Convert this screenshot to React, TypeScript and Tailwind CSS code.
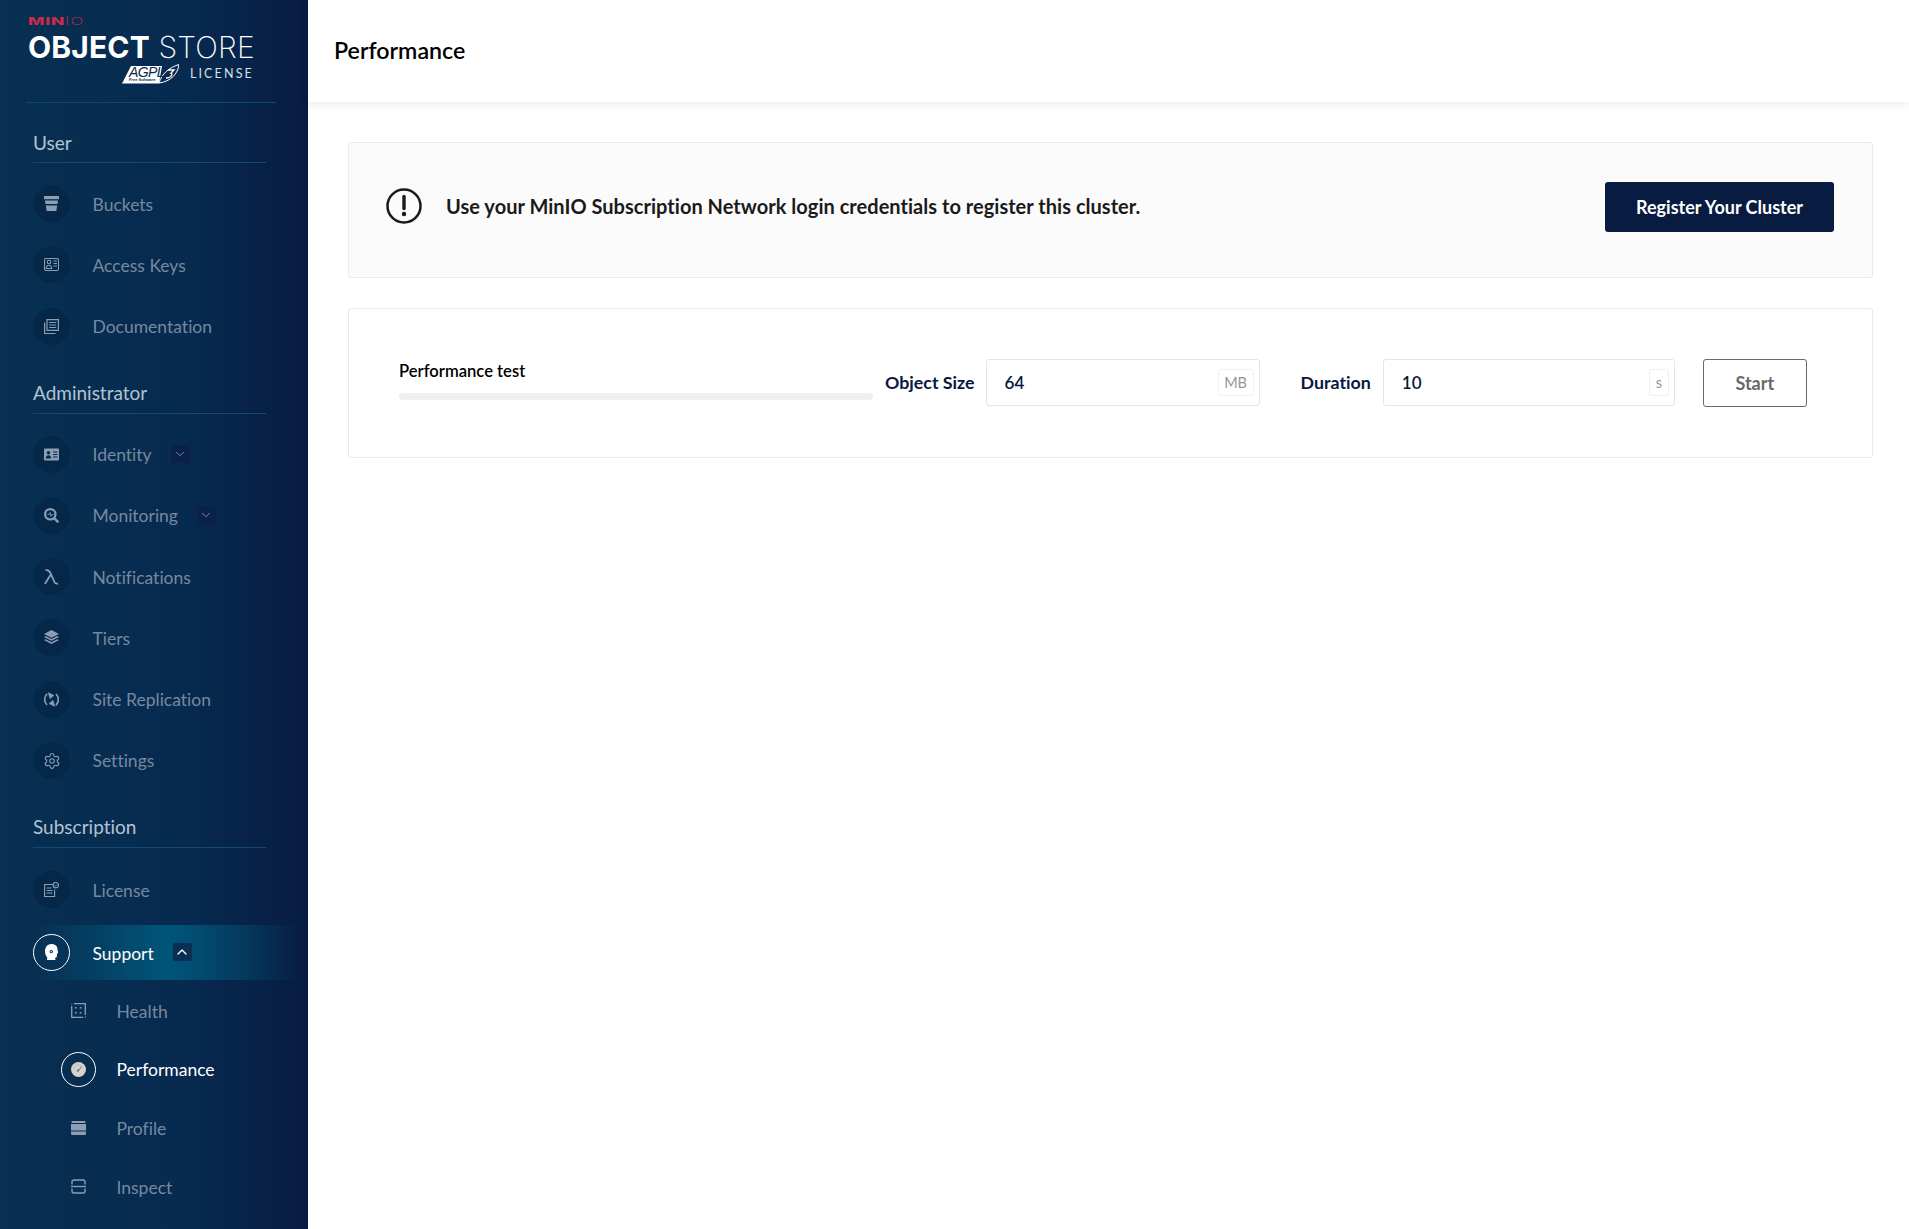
import React from "react";
import { ChevronDown, ChevronUp, Settings } from "lucide-react";

const IconBucket = () => (
  <svg width="15" height="15" viewBox="0 0 15 15" fill="currentColor">
    <path d="M0 0h15v3.200H0z" />
    <path d="M1 4.600h13l-.5 3.400H1.500z" />
    <path d="M1.800 9.400h11.400l-.9 5.600H2.700z" />
  </svg>
);

const IconAccess = () => (
  <svg width="15" height="15" viewBox="0 0 15 15" fill="none" stroke="currentColor" strokeWidth="1.100">
    <rect x="0.500" y="1.500" width="14" height="12" rx="1.500" />
    <circle cx="5" cy="5" r="1.800" />
    <path d="M2.200 11.500c0-2.200 1.200-3.300 2.800-3.300s2.800 1.100 2.800 3.300z" />
    <path d="M9.500 4h3.500M9.500 6.500h3.500M9.500 9h3.500" />
  </svg>
);

const IconDocs = () => (
  <svg width="15" height="15" viewBox="0 0 15 15" fill="none" stroke="currentColor" strokeWidth="1.200">
    <path d="M3 .6h11.400v10.800H3z" />
    <path d="M.6 3.500v11h11" />
    <path d="M5.200 3.500h7M5.200 6h7M5.200 8.500h7" />
  </svg>
);

const IconIdentity = () => (
  <svg width="15" height="15" viewBox="0 0 15 15" fill="currentColor">
    <path fillRule="evenodd" d="M1 1.500h13a1 1 0 0 1 1 1v10a1 1 0 0 1-1 1H1a1 1 0 0 1-1-1v-10a1 1 0 0 1 1-1zM4.500 4a1.700 1.700 0 1 0 0 3.400 1.700 1.700 0 0 0 0-3.400zM1.800 11.500h5.400c0-2-1.200-3.200-2.700-3.200s-2.700 1.200-2.700 3.200zM9 4.500v1h4.500v-1zM9 7v1h4.500V7zM9 9.500v1h4.500v-1z" />
  </svg>
);

const IconMonitoring = () => (
  <svg width="15" height="15" viewBox="0 0 15 15" fill="none" stroke="currentColor">
    <circle cx="6.300" cy="6.300" r="5.200" strokeWidth="2.200" />
    <path d="M10 10l4.300 4.300" strokeWidth="2.400" />
    <path d="M3.500 6.500h1.500l1-2 1 4 .8-2H9.500" strokeWidth="0.900" />
  </svg>
);

const IconLambda = () => (
  <svg width="15" height="16" viewBox="0 0 15 16" fill="none" stroke="currentColor" strokeWidth="1.800">
    <path d="M1.500 1.200c3-.6 4 .4 5 3l4 9c.6 1.400 1.800 1.700 3.500 1.400" />
    <path d="M6.800 5.500L.9 15" />
  </svg>
);

const IconTiers = () => (
  <svg width="15" height="15" viewBox="0 0 15 15" fill="currentColor">
    <path d="M7.500 0L15 3.900 7.500 7.800 0 3.900z" />
    <path d="M1.700 6l5.800 3 5.800-3 1.700.9-7.500 3.900L0 6.900z" />
    <path d="M1.700 9.200l5.800 3 5.800-3 1.700.9L7.500 14 0 10.100z" />
  </svg>
);

const IconReplication = () => (
  <svg width="15" height="15" viewBox="0 0 15 15" fill="none" stroke="currentColor" strokeWidth="1.600">
    <path d="M3 13C-.2 9.800 0 4.500 3.200 1.800" />
    <path d="M12 2c3.200 3.200 3 8.500-.2 11.200" />
    <path d="M4.200.6L10 3.400 6 6.800z" fill="currentColor" strokeWidth="0.500" />
    <path d="M10.800 14.400L5 11.600l4-3.400z" fill="currentColor" strokeWidth="0.500" />
  </svg>
);

const IconLicense = () => (
  <svg width="15" height="15" viewBox="0 0 15 15" fill="none" stroke="currentColor" strokeWidth="1.100">
    <path d="M9 2.500H.6v12h10V7.500" />
    <path d="M2.600 6h5M2.600 8.500h6M2.600 11h6" />
    <circle cx="11.800" cy="3.200" r="2.700" />
    <path d="M10.500 3.200l1 1 1.600-1.800" strokeWidth="0.800" />
  </svg>
);

const IconSupport = () => (
  <svg width="13" height="16" viewBox="0 0 13 16" fill="currentColor">
    <path fillRule="evenodd" d="M6.500 0C10 0 12.500 2.200 12.500 5.200c0 1.300.5 2.300.5 3.300 0 .8-.7 1.200-1 1.500l-.2 2.500c-.1.800-.8 1.300-1.600 1.300H10L10.500 16H2l.3-2.600C.9 12 0 9.800 0 7.200 0 2.800 2.800 0 6.500 0zM6.300 5.900a1.700 1.700 0 1 0 0 3.400 1.700 1.700 0 0 0 0-3.400z" />
    <circle cx="6.300" cy="7.600" r="0.700" />
    <path d="M7.300 8.800l1.700 2.200-.7.500-1.600-2.100z" />
  </svg>
);

const IconHealth = () => (
  <svg width="15" height="15" viewBox="0 0 15 15" fill="none" stroke="currentColor" strokeWidth="1.300">
    <path d="M.7 3v11.300h11.300" />
    <path d="M3 .7h11.300V12" />
    <path d="M14.300 13.500v1" />
    <path d="M.7.700v.8" />
    <g fill="currentColor" stroke="none">
      <rect x="4" y="4" width="1.600" height="1.600" />
      <rect x="8.700" y="4" width="1.600" height="1.600" />
      <rect x="4" y="9" width="1.600" height="1.600" />
      <rect x="8.700" y="9" width="1.600" height="1.600" />
    </g>
  </svg>
);

const IconGauge = () => (
  <svg width="15" height="15" viewBox="0 0 15 15">
    <circle cx="7.500" cy="7.500" r="7.500" fill="#d8d2cc" />
    <path d="M7.500 8.500L10.500 4.500" stroke="#6b7b8c" strokeWidth="1" />
    <circle cx="7" cy="8.500" r="1.300" fill="#6b7b8c" />
    <path d="M3 7a4.500 4.500 0 0 1 8-2.500" fill="none" stroke="#8e9aa6" strokeWidth="0.800" strokeDasharray="1 1" />
  </svg>
);

const IconProfile = () => (
  <svg width="15" height="14" viewBox="0 0 15 14" fill="currentColor">
    <path d="M1.500 0h12a1 1 0 0 1 1 1v1H.5V1a1 1 0 0 1 1-1z" />
    <rect x="0" y="3" width="15" height="6.500" />
    <path d="M0 10.500h15V12.500a1.500 1.500 0 0 1-1.500 1.500h-12A1.500 1.500 0 0 1 0 12.500z" />
  </svg>
);

const IconInspect = () => (
  <svg width="15" height="15" viewBox="0 0 15 15" fill="none" stroke="currentColor" strokeWidth="1.400">
    <path d="M1 5.500V3a2 2 0 0 1 2-2h9a2 2 0 0 1 2 2v2.500" />
    <path d="M1 9.500V12a2 2 0 0 0 2 2h9a2 2 0 0 0 2-2V9.500" />
    <path d="M0 7.500h15" />
  </svg>
);

const Logo = () => (
  <div className="h-[103px] mx-[26px] w-[250px] border-b border-[#0e4a6a] pt-[16px] pl-[2px] shrink-0 font-['Inter',sans-serif]">
    <div className="text-[#c72c48] text-[11px] leading-[11px] font-extrabold tracking-[0.5px] scale-x-[1.58] origin-left">
      MIN<span className="font-extralight">IO</span>
    </div>
    <div className="text-white text-[30px] leading-[28px] mt-[6px] whitespace-nowrap tracking-[0.15px]">
      <span className="font-bold">OBJECT</span> <span className="font-extralight">STORE</span>
    </div>
    <div className="flex items-center justify-end mt-[3px] pr-[22px]">
      <div className="relative w-[57px] h-[20px] mr-[11px]">
        <svg width="57" height="20" viewBox="0 0 57 20" className="absolute inset-0">
          <path d="M9 2h31l-3 17.500H0z" fill="#fff" />
          <path d="M37 19c3-9 9-15 20-18.500-1 9-8 17-20 18.500z" fill="#0b2a4d" stroke="#fff" strokeWidth="1" />
          <path d="M46 6h6l-3 3c2 0 1 5-5 5" fill="none" stroke="#fff" strokeWidth="1.300" />
        </svg>
        <span className="absolute left-[7px] top-[1px] text-[#0b2a4d] text-[14px] leading-[14px] italic font-['Liberation_Sans',sans-serif] tracking-[-0.6px]">
          AGPL
        </span>
        <span className="absolute left-[7px] top-[14px] text-[#0b2a4d] text-[4px] leading-[4px] font-bold font-['Liberation_Sans',sans-serif] whitespace-nowrap">
          Free Software
        </span>
      </div>
      <span className="text-[#d9e0e8] text-[12.500px] leading-[16px] tracking-[2.150px] font-['Lato',sans-serif]">LICENSE</span>
    </div>
  </div>
);

const SectionHeader = ({ title, className }: { title: string; className: string }) => (
  <div className={`mx-[33px] w-[233px] border-b border-[#124a70] flex items-end text-[#b4c3d2] text-[19px] leading-[24px] ${className}`}>
    {title}
  </div>
);

type NavItemProps = {
  icon: React.ReactNode;
  label: string;
  chevron?: boolean;
};

const NavItem = ({ icon, label, chevron }: NavItemProps) => (
  <div className="h-[61.300px] pl-[33px] flex items-center">
    <div className="w-[37px] h-[37px] rounded-full bg-[#052849] flex items-center justify-center text-[#8b9eb3]">
      {icon}
    </div>
    <span className="ml-[22.500px] mt-[2px] text-[#76899f] text-[17.500px]">{label}</span>
    {chevron && (
      <span className="ml-[19px] w-[19px] h-[18px] rounded-[2px] bg-[#0a224a] flex items-center justify-center text-[#8499b0]">
        <ChevronDown size={14} strokeWidth={1.500} />
      </span>
    )}
  </div>
);

const SubItem = ({ icon, label, active }: { icon: React.ReactNode; label: string; active?: boolean }) => (
  <div className="h-[58.700px] pl-[61px] flex items-center">
    <div className={`w-[35px] h-[35px] rounded-full flex items-center justify-center text-[#8b9eb3] ${active ? "border border-white" : ""}`}>
      {icon}
    </div>
    <span className={`ml-[20.500px] mt-[2px] text-[17.500px] ${active ? "text-white" : "text-[#76899f]"}`}>{label}</span>
  </div>
);

const Sidebar = () => (
  <aside className="w-[308px] h-[1229px] shrink-0 overflow-hidden text-[#76899f] bg-[linear-gradient(90deg,#073052_0%,#072a50_60%,#081c42_100%)]">
    <Logo />
    <SectionHeader title="User" className="h-[60px] pb-[7px]" />
    <div className="mt-[10px]">
      <NavItem icon={<IconBucket />} label="Buckets" />
      <NavItem icon={<IconAccess />} label="Access Keys" />
      <NavItem icon={<IconDocs />} label="Documentation" />
    </div>
    <SectionHeader title="Administrator" className="h-[57px] pb-[8px]" />
    <div className="mt-[9.500px]">
      <NavItem icon={<IconIdentity />} label="Identity" chevron />
      <NavItem icon={<IconMonitoring />} label="Monitoring" chevron />
      <NavItem icon={<IconLambda />} label="Notifications" />
      <NavItem icon={<IconTiers />} label="Tiers" />
      <NavItem icon={<IconReplication />} label="Site Replication" />
      <NavItem icon={<Settings size={18} strokeWidth={1.500} />} label="Settings" />
    </div>
    <SectionHeader title="Subscription" className="h-[57px] pb-[8px]" />
    <div className="mt-[11px]">
      <NavItem icon={<IconLicense />} label="License" />
      <div className="h-[55px] mt-[4.400px] ml-[33px] mr-[8px] flex items-center bg-[linear-gradient(90deg,transparent_0%,#00567a_50%,transparent_100%)]">
        <div className="w-[37px] h-[37px] rounded-full border border-white bg-[#063356] flex items-center justify-center text-white">
          <IconSupport />
        </div>
        <span className="ml-[22.500px] mt-[3px] text-white text-[17.500px]">Support</span>
        <span className="ml-[19px] w-[19px] h-[18px] rounded-[2px] bg-[#0a2f55] flex items-center justify-center text-white">
          <ChevronUp size={16} strokeWidth={2} />
        </span>
      </div>
      <div className="mt-[1.600px]">
        <SubItem icon={<IconHealth />} label="Health" />
        <SubItem icon={<IconGauge />} label="Performance" active />
        <SubItem icon={<IconProfile />} label="Profile" />
        <SubItem icon={<IconInspect />} label="Inspect" />
      </div>
    </div>
  </aside>
);

const UnitInput = ({ value, unit, width, unitWidth }: { value: string; unit: string; width: string; unitWidth: string }) => (
  <div className={`h-[47px] ${width} border border-[#e5e5e5] rounded-[3px] flex items-center justify-between pl-[18px] pr-[5px]`}>
    <span className="text-[#07193e] text-[17px] font-semibold">{value}</span>
    <span className={`h-[27px] ${unitWidth} border border-[#f0f0f0] rounded-[3px] flex items-center justify-center text-[#969696] text-[14.500px]`}>
      {unit}
    </span>
  </div>
);

export default function App() {
  return (
    <div className="flex w-[1909px] h-[1229px] overflow-hidden bg-white font-['Lato',sans-serif] [font-variant-ligatures:none]">
      <Sidebar />
      <main className="flex-1 min-w-0">
        <header className="h-[102px] flex items-center pl-[26px] pb-[2px] bg-white shadow-[0_3px_10px_rgba(0,0,0,0.08)]">
          <h1 className="text-[#000] text-[23.200px] font-semibold">Performance</h1>
        </header>
        <div className="pt-[40px] pl-[40px] pr-[36px]">
          <section className="h-[136px] border border-[#eaeaea] bg-[#fbfbfb] rounded-[3px] flex items-center pl-[37px] pr-[38px] pb-[8px]">
            <svg width="36" height="36" viewBox="0 0 36 36" fill="none" className="shrink-0">
              <circle cx="18" cy="18" r="16.500" stroke="#1a1a1a" strokeWidth="2.500" />
              <path d="M18 8.500v12" stroke="#1a1a1a" strokeWidth="3.400" strokeLinecap="round" />
              <circle cx="18" cy="26" r="2.200" fill="#1a1a1a" />
            </svg>
            <p className="ml-[24px] text-[#1a1a1a] text-[20px] tracking-[0.03px] font-bold whitespace-nowrap">
              Use your MinIO Subscription Network login credentials to register this cluster.
            </p>
            <button className="ml-auto mt-[2px] w-[229px] h-[50px] bg-[#081c42] rounded-[3px] text-white text-[18px] font-bold">
              Register Your Cluster
            </button>
          </section>
          <section className="mt-[30px] h-[150px] border border-[#eaeaea] rounded-[3px] flex items-center pl-[50px] pb-[1px]">
            <div className="w-[474px] pb-[5px]">
              <div className="text-[#000] text-[16.600px] font-semibold leading-[20px]">Performance test</div>
              <div className="h-[7px] mt-[12px] rounded-[4px] bg-[#f0f0f0]" />
            </div>
            <label className="ml-[12px] text-[#07193e] text-[17.800px] font-bold">Object Size</label>
            <div className="ml-[11px]">
              <UnitInput value="64" unit="MB" width="w-[274px]" unitWidth="w-[36px]" />
            </div>
            <label className="ml-[41px] text-[#07193e] text-[17.800px] font-bold">Duration</label>
            <div className="ml-[12px]">
              <UnitInput value="10" unit="s" width="w-[292px]" unitWidth="w-[20px]" />
            </div>
            <button className="ml-[28px] mt-[1px] w-[104px] h-[48px] border border-[#696969] rounded-[3px] text-[#696969] text-[18px] font-bold">
              Start
            </button>
          </section>
        </div>
      </main>
    </div>
  );
}
